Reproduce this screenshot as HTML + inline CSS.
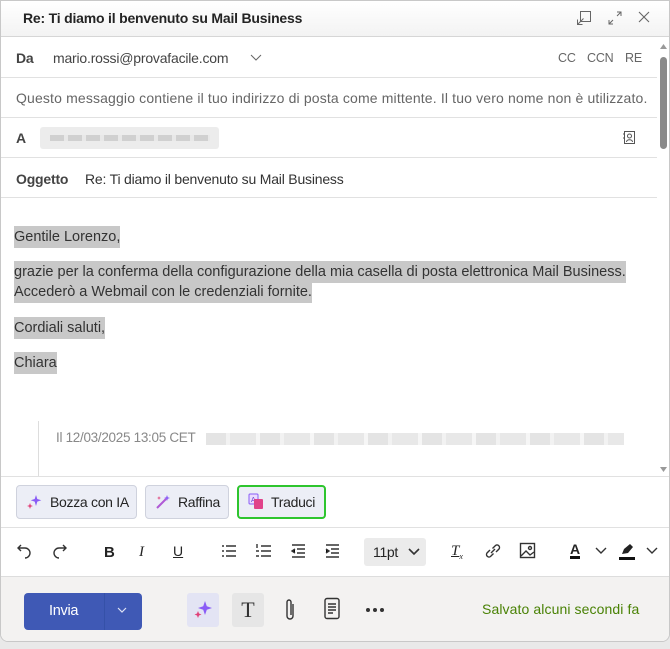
<!DOCTYPE html>
<html><head><meta charset="utf-8">
<style>
*{box-sizing:border-box;margin:0;padding:0}
body{width:670px;height:649px;background:#e9e9e9;font-family:"Liberation Sans",sans-serif;color:#242424;overflow:hidden;position:relative}
.win{position:absolute;left:0;top:0;width:670px;height:642px;background:#fff;border:1px solid #c8c8c8;border-radius:0 0 8px 8px;overflow:hidden}
.title{height:36px;background:linear-gradient(#fff,#f3f3f3);border-bottom:1px solid #d6d6d6;position:relative}
.title b{position:absolute;left:22px;top:9px;font-size:14px;letter-spacing:-0.2px}
.row{position:absolute;left:0;width:656px;border-bottom:1px solid #e1e1e1;font-size:14px;letter-spacing:-0.2px}
.t{position:absolute;white-space:nowrap}
.hl{background:#c8c8c8;padding:3px 0}
.body{position:absolute;left:13px;font-size:14.5px;letter-spacing:0;line-height:20px;color:#333}
.btn{position:absolute;top:484px;height:34px;background:#eceef6;border:1px solid #cfd2dd;border-radius:4px;font-size:14px;letter-spacing:-0.3px;line-height:32px}
.tb{position:absolute;top:541px;font-size:15px}
.foot{position:absolute;left:0;top:575px;width:670px;height:67px;background:#f3f2f1;border-top:1px solid #ddd}
</style></head><body>
<div class="win">
<div class="title"><b>Re: Ti diamo il benvenuto su Mail Business</b>
<svg style="position:absolute;left:575px;top:9px" width="16" height="16" viewBox="0 0 16 16" fill="none" stroke="#666" stroke-width="1"><rect x="4.5" y="1.5" width="10" height="10"/><path d="M1.5 14.5l6-6M1.5 9.5v5h5"/></svg>
<svg style="position:absolute;left:606px;top:9px" width="16" height="16" viewBox="0 0 16 16" fill="none" stroke="#666" stroke-width="1"><path d="M10 2h4v4M14 2l-4 4M2 10v4h4M2 14l4-4"/></svg>
<svg style="position:absolute;left:636px;top:9px" width="14" height="14" viewBox="0 0 14 14" stroke="#666" stroke-width="1.1"><path d="M2 2l10 10M12 2L2 12"/></svg>
</div>
<div class="row" style="top:37px;height:40px"><span class="t" style="left:15px;top:12px;font-weight:bold;color:#444">Da</span><span class="t" style="left:52px;top:12px;color:#444">mario.rossi@provafacile.com</span>
<svg style="position:absolute;left:249px;top:15px" width="12" height="10"><path d="M1 2l5 5 5-5" fill="none" stroke="#666"/></svg>
<span class="t" style="left:557px;top:13px;font-size:12.5px;color:#666">CC</span><span class="t" style="left:586px;top:13px;font-size:12.5px;color:#666">CCN</span><span class="t" style="left:624px;top:13px;font-size:12.5px;color:#666">RE</span></div>
<div class="row" style="top:77px;height:40px"><span class="t" style="left:15px;top:12px;color:#666;letter-spacing:0.15px">Questo messaggio contiene il tuo indirizzo di posta come mittente. Il tuo vero nome non è utilizzato.</span></div>
<div class="row" style="top:117px;height:40px"><span class="t" style="left:15px;top:12px;font-weight:bold;color:#444">A</span><div style="position:absolute;left:39px;top:9px;width:179px;height:22px;background:#ececec;border-radius:3px"><div style="margin:8px 0 0 10px;width:160px;height:6px;background:repeating-linear-gradient(90deg,#d0d0d0 0 14px,#e8e8e8 14px 18px)"></div></div>
<svg style="position:absolute;left:621px;top:12px" width="14" height="15" fill="none" stroke="#555"><rect x="2.5" y="1.5" width="10" height="12"/><circle cx="7.5" cy="6" r="2"/><path d="M4.5 12c0-3 6-3 6 0M1 4h2M1 8h2"/></svg></div>
<div class="row" style="top:157px;height:40px"><span class="t" style="left:15px;top:13px;font-weight:bold;color:#444">Oggetto</span><span class="t" style="left:84px;top:13px;color:#333">Re: Ti diamo il benvenuto su Mail Business</span></div>
<div class="body" style="top:226px"><span class="hl">Gentile Lorenzo,</span></div>
<div class="body" style="top:261px"><span class="hl">grazie per la conferma della configurazione della mia casella di posta elettronica Mail Business.</span><br><span class="hl">Accederò a Webmail con le credenziali fornite.</span></div>
<div class="body" style="top:317px"><span class="hl">Cordiali saluti,</span></div>
<div class="body" style="top:352px"><span class="hl">Chiara</span></div>
<div style="position:absolute;left:37px;top:420px;width:1px;height:55px;background:#ddd"></div>
<div class="t" style="left:55px;top:429px;font-size:13.5px;letter-spacing:-0.3px;color:#888">Il 12/03/2025 13:05 CET</div>
<div style="position:absolute;left:205px;top:432px;width:418px;height:12px;background:repeating-linear-gradient(90deg,#e4e4e4 0 20px,#f2f2f2 20px 24px,#e8e8e8 24px 50px,#f6f6f6 50px 54px)"></div>
<div style="position:absolute;left:656px;top:37px;width:13px;height:438px;background:#fff"><div style="position:absolute;left:3px;top:19px;width:7px;height:92px;background:#8a8a8a;border-radius:4px"></div>
<svg style="position:absolute;left:2px;top:5px" width="9" height="7"><path d="M4.5 1L8 6H1z" fill="#999"/></svg><svg style="position:absolute;left:2px;top:428px" width="9" height="7"><path d="M1 1h7L4.5 6z" fill="#999"/></svg></div>
<div style="position:absolute;left:0;top:475px;width:670px;height:1px;background:#e1e1e1"></div>
<div class="btn" style="left:15px;width:121px"><svg style="position:absolute;left:9px;top:8px" width="16" height="16"><path d="M10 1l1.3 4 4 1.3-4 1.3L10 12 8.7 7.6 4.7 6.3l4-1.3z" fill="#8a5cf6"/><path d="M4 9l.8 2.2L7 12l-2.2.8L4 15l-.8-2.2L1 12l2.2-.8z" fill="#e0427a"/></svg><span style="position:absolute;left:33px">Bozza con IA</span></div>
<div class="btn" style="left:144px;width:84px"><svg style="position:absolute;left:9px;top:8px" width="16" height="16"><path d="M2 14L11 5" stroke="#b05ad6" stroke-width="2"/><path d="M12 1l.8 2.2L15 4l-2.2.8L12 7l-.8-2.2L9 4l2.2-.8z" fill="#8a5cf6"/><path d="M4 2l.5 1.5L6 4l-1.5.5L4 6l-.5-1.5L2 4l1.5-.5z" fill="#e0427a"/></svg><span style="position:absolute;left:32px">Raffina</span></div>
<div class="btn" style="left:236px;width:89px;border:2px solid #2ec52e;line-height:30px"><svg style="position:absolute;left:9px;top:6px" width="16" height="17"><rect x="1" y="1" width="9" height="10" rx="1" fill="#eadcff" stroke="#8a5cf6"/><text x="3" y="9" font-size="7" fill="#6a3fd0" font-family="Liberation Sans">A</text><rect x="6" y="6" width="9" height="10" rx="1" fill="#e0428a"/></svg><span style="position:absolute;left:32px">Traduci</span></div>
<div style="position:absolute;left:0;top:526px;width:670px;height:1px;background:#e1e1e1"></div>
<svg class="tb" style="left:15px" width="16" height="18" fill="none" stroke="#333" stroke-width="1.4"><path d="M5 3L2 6l3 3M2 6h7a5 5 0 010 10"/></svg>
<svg class="tb" style="left:51px" width="16" height="18" fill="none" stroke="#333" stroke-width="1.4"><path d="M11 3l3 3-3 3M14 6H7a5 5 0 000 10"/></svg>
<b class="tb" style="left:103px;top:543px">B</b><i class="tb" style="left:138px;top:543px;font-family:'Liberation Serif'">I</i>
<span class="tb" style="left:172px;top:542px;text-decoration:underline;font-size:14px">U</span>
<svg class="tb" style="left:220px" width="16" height="18" stroke="#333" stroke-width="1.4"><path d="M5 4h10M5 9h10M5 14h10M1 4h2M1 9h2M1 14h2"/></svg>
<svg class="tb" style="left:254px" width="16" height="18" stroke="#333" stroke-width="1.4"><path d="M6 4h10M6 9h10M6 14h10M2 2v4M1 9h3M1 14h3"/></svg>
<svg class="tb" style="left:289px" width="16" height="18" stroke="#333" stroke-width="1.4"><path d="M2 3h13M7 7h8M7 11h8M2 15h13M5 7L2 9l3 2"/></svg>
<svg class="tb" style="left:323px" width="16" height="18" stroke="#333" stroke-width="1.4"><path d="M2 3h13M7 7h8M7 11h8M2 15h13M2 7l3 2-3 2"/></svg>
<div style="position:absolute;left:363px;top:537px;width:62px;height:28px;background:#ebebeb;border-radius:3px;font-size:14px;letter-spacing:-0.3px;padding:6px 0 0 9px">11pt<svg style="position:absolute;left:44px;top:9px" width="12" height="10"><path d="M1 2l5 5 5-5" fill="none" stroke="#333" stroke-width="1.6"/></svg></div>
<span class="tb" style="left:450px;top:542px;font-style:italic;font-family:'Liberation Serif';text-decoration:underline">T<sub style="font-size:8px">x</sub></span>
<svg class="tb" style="left:483px" width="18" height="18" fill="none" stroke="#333" stroke-width="1.4"><path d="M7 11l4-4M6 8l-3 3a2.5 2.5 0 003.5 3.5l3-3M12 10l3-3a2.5 2.5 0 00-3.5-3.5l-3 3"/></svg>
<svg class="tb" style="left:518px" width="18" height="18" fill="none" stroke="#333" stroke-width="1.4"><rect x="1.5" y="1.5" width="14" height="14"/><path d="M2 14l5-5 4 4 4-3"/><circle cx="11" cy="6" r="1.5"/></svg>
<span class="tb" style="left:569px;top:541px;font-weight:bold;font-size:14px;border-bottom:3px solid #111;line-height:14px">A</span>
<svg class="tb" style="left:594px;top:545px" width="12" height="10"><path d="M1 2l5 5 5-5" fill="none" stroke="#333" stroke-width="1.4"/></svg>
<svg class="tb" style="left:617px" width="18" height="18"><path d="M4 12l2-5 6-5 3 3-5 6z" fill="#222"/><rect x="1" y="15" width="16" height="3" fill="#111"/></svg>
<svg class="tb" style="left:645px;top:545px" width="12" height="10"><path d="M1 2l5 5 5-5" fill="none" stroke="#333" stroke-width="1.4"/></svg>
<div class="foot">
<div style="position:absolute;left:23px;top:16px;width:118px;height:37px;background:#3f59b5;border-radius:4px;color:#fff;font-size:14.5px;letter-spacing:-0.3px"><span style="position:absolute;left:25px;top:10px">Invia</span><div style="position:absolute;left:80px;top:0;width:1px;height:37px;background:#3551a8"></div><svg style="position:absolute;left:92px;top:12px" width="12" height="10"><path d="M2 3l4 4 4-4" fill="none" stroke="#dfe4f5" stroke-width="1.2"/></svg></div>
<div style="position:absolute;left:186px;top:16px;width:32px;height:34px;background:#e3e4f4;border-radius:3px"><svg style="position:absolute;left:6px;top:7px" width="20" height="20"><path d="M12 1l1.8 5.2 5.2 1.8-5.2 1.8L12 15l-1.8-5.2L5 8l5.2-1.8z" fill="#8a5cf6"/><path d="M5 11l1 2.5 2.5 1-2.5 1L5 18l-1-2.5-2.5-1 2.5-1z" fill="#e0427a"/></svg></div>
<div style="position:absolute;left:231px;top:16px;width:32px;height:34px;background:#e6e6e6;border-radius:3px;font-family:'Liberation Serif';font-size:22px;text-align:center;line-height:34px;color:#333">T</div>
<svg style="position:absolute;left:281px;top:20px" width="16" height="26" fill="none" stroke="#333" stroke-width="1.4"><path d="M11 7v12a3 3 0 01-6 0V5a2 2 0 014 0v13"/></svg>
<svg style="position:absolute;left:322px;top:20px" width="18" height="24" fill="none" stroke="#333" stroke-width="1.4"><rect x="2" y="1.5" width="14" height="20" rx="2"/><path d="M5 7h8M5 10h8M5 13h8M5 16h5"/></svg>
<svg style="position:absolute;left:364px;top:30px" width="20" height="6" fill="#333"><circle cx="3" cy="3" r="2"/><circle cx="10" cy="3" r="2"/><circle cx="17" cy="3" r="2"/></svg>
<span style="position:absolute;left:481px;top:24px;font-size:14px;letter-spacing:0.1px;color:#498205">Salvato alcuni secondi fa</span>
</div>
</div>
</body></html>
